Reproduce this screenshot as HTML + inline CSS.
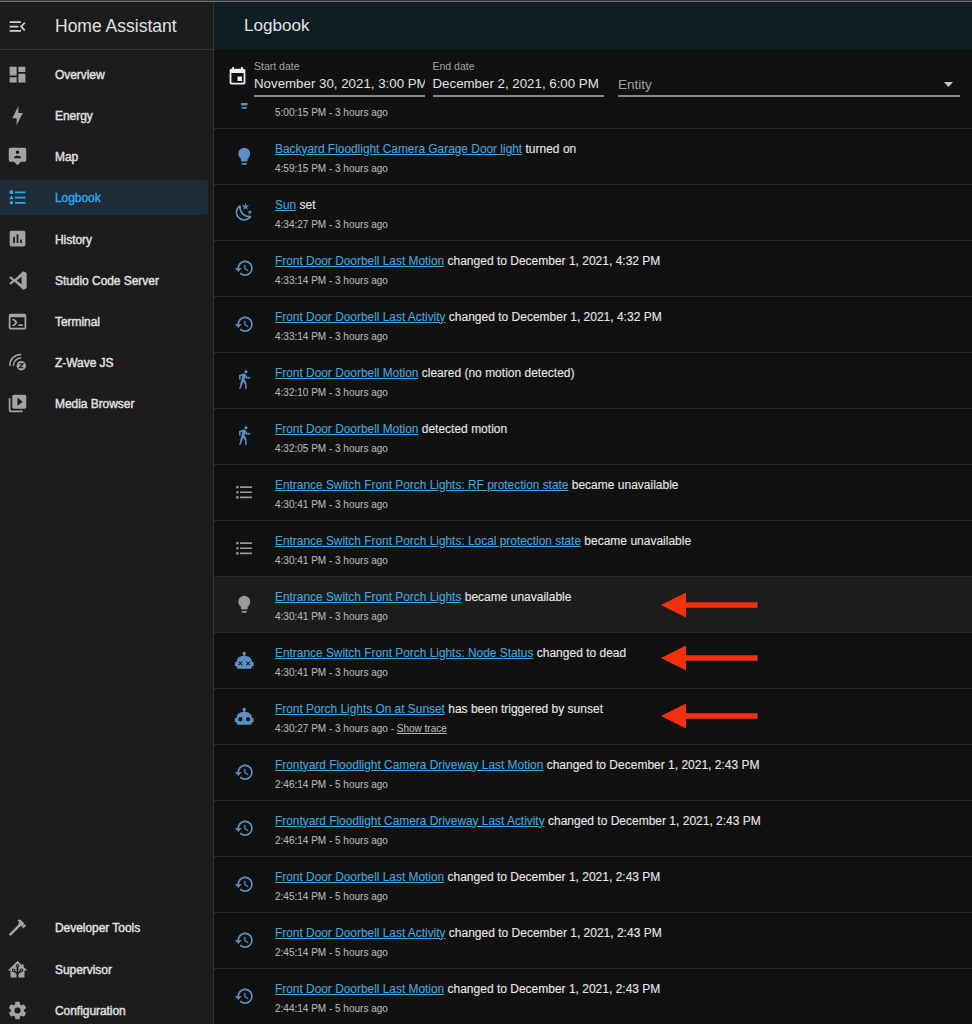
<!DOCTYPE html>
<html><head><meta charset="utf-8">
<style>
html,body{margin:0;padding:0;width:972px;height:1024px;overflow:hidden;background:#111111;font-family:"Liberation Sans",sans-serif;}
.a{position:absolute;}
.t{position:absolute;white-space:nowrap;line-height:20px;}
svg{position:absolute;display:block;}
.si{left:55px;font-weight:normal;color:#e1e1e1;font-size:12px;letter-spacing:-0.05px;-webkit-text-stroke:0.4px currentColor}
.row{position:absolute;left:214px;width:758px;height:55px;border-top:1px solid #2a2a2a;}
.msg{left:61px;font-size:12px;color:#e6e6e6;-webkit-text-stroke:0.12px currentColor}
.msg a{color:#46a4dc;text-decoration:underline;font-size:11.9px}
.tm{left:61px;font-size:10px;color:#b4b4b4;-webkit-text-stroke:0.1px currentColor}
.tm a{color:#b4b4b4;text-decoration:underline;}
</style></head>
<body>

<div class="a" style="left:0;top:0;width:972px;height:1px;background:#33383c"></div>
<div class="a" style="left:0;top:1px;width:972px;height:1px;background:#6b6f73"></div>
<div class="a" style="left:0;top:2px;width:213px;height:1022px;background:#1c1c1c"></div>
<div class="a" style="left:213px;top:2px;width:1px;height:1022px;background:#353535"></div>
<div class="a" style="left:0;top:49px;width:213px;height:1px;background:#353535"></div>
<div class="a" style="left:214px;top:2px;width:758px;height:47px;background:#101e24"></div>
<div class="a" style="left:214px;top:49px;width:758px;height:1px;background:#10191d"></div>
<svg style="left:7px;top:15.6px" width="21" height="21" viewBox="0 0 24 24"><path fill="#d2d2d2" fill-rule="evenodd" d="M21,15.61L19.59,17L14.58,12L19.59,7L21,8.39L17.44,12L21,15.61M3,6H16V8H3V6M3,13V11H13V13H3M3,18V16H16V18H3Z"/></svg>
<div class="t" style="left:55px;top:16px;font-size:17.5px;color:#e1e1e1;">Home Assistant</div>
<div class="a" style="left:0;top:180px;width:208px;height:35px;background:#1d2c37;border-radius:0 3px 3px 0"></div>
<svg style="left:7px;top:64px" width="21" height="21" viewBox="0 0 24 24"><path fill="#a3a3a3" fill-rule="evenodd" d="M13,3V9H21V3M13,21H21V11H13M3,21H11V15H3M3,13H11V3H3V13Z"/></svg>
<div class="t si" style="top:65.0px;color:#e1e1e1">Overview</div>
<svg style="left:7px;top:105px" width="21" height="21" viewBox="0 0 24 24"><path fill="#a3a3a3" fill-rule="evenodd" d="M11 15H6L13 1V9H18L11 23V15Z"/></svg>
<div class="t si" style="top:106.1px;color:#e1e1e1">Energy</div>
<svg style="left:7px;top:146px" width="21" height="21" viewBox="0 0 24 24"><path fill="#a3a3a3" fill-rule="evenodd" d="M2,4C2,2.89 2.9,2 4,2H20A2,2 0 0,1 22,4V16A2,2 0 0,1 20,18H16L12,22L8,18H4A2,2 0 0,1 2,16V4M16,14V13C16,11.67 13.33,11 12,11C10.67,11 8,11.67 8,13V14H16M12,5A2,2 0 0,0 10,7A2,2 0 0,0 12,9A2,2 0 0,0 14,7A2,2 0 0,0 12,5Z"/></svg>
<div class="t si" style="top:147.2px;color:#e1e1e1">Map</div>
<svg style="left:7px;top:187px" width="21" height="21" viewBox="0 0 24 24"><path fill="#2aa7ee" fill-rule="evenodd" d="M5,9.5L7.5,14H2.5L5,9.5M3,4H7V8H3V4M5,20A2,2 0 0,0 7,18A2,2 0 0,0 5,16A2,2 0 0,0 3,18A2,2 0 0,0 5,20M9,5V7H21V5H9M9,19H21V17H9V19M9,13H21V11H9V13Z"/></svg>
<div class="t si" style="top:188.4px;color:#2aa7ee">Logbook</div>
<svg style="left:7px;top:228px" width="21" height="21" viewBox="0 0 24 24"><path fill="#a3a3a3" fill-rule="evenodd" d="M19 3H5C3.9 3 3 3.9 3 5V19C3 20.1 3.9 21 5 21H19C20.1 21 21 20.1 21 19V5C21 3.9 20.1 3 19 3M9 17H7V10H9V17M13 17H11V7H13V17M17 17H15V13H17V17Z"/></svg>
<div class="t si" style="top:229.5px;color:#e1e1e1">History</div>
<svg style="left:7px;top:270px" width="21" height="21" viewBox="-0.8 -0.8 25.6 25.6"><path fill="#a3a3a3" fill-rule="evenodd" d="M17,16.47V7.39L11,11.93L17,16.47M2.22,9.19C1.95,8.92 1.97,8.41 2.2,8.08L3.2,7.16C3.37,7 3.8,6.93 4.11,7.16L8.37,10.41L18.25,1.38C18.65,1 19.32,0.86 19.86,1.12L22.66,2.5C22.95,2.66 23.2,2.97 23.2,3.34V20.62C23.2,20.97 22.99,21.27 22.66,21.44L19.86,22.82C19.36,23.05 18.7,22.97 18.26,22.57L8.38,13.5L4.11,16.75C3.8,16.97 3.37,16.93 3.2,16.75L2.2,15.83C1.94,15.55 1.97,15.08 2.22,14.81L5.97,11.93L2.22,9.19Z"/></svg>
<div class="t si" style="top:270.6px;color:#e1e1e1">Studio Code Server</div>
<svg style="left:7px;top:311px" width="21" height="21" viewBox="0 0 24 24"><path fill="#a3a3a3" fill-rule="evenodd" d="M20,19V7H4V19H20M20,3A2,2 0 0,1 22,5V19A2,2 0 0,1 20,21H4A2,2 0 0,1 2,19V5C2,3.89 2.9,3 4,3H20M13,17V15H18V17H13M9.58,13L5.57,9H8.4L11.7,12.3C12.09,12.69 12.09,13.33 11.7,13.72L8.42,17H5.59L9.58,13Z"/></svg>
<div class="t si" style="top:311.7px;color:#e1e1e1">Terminal</div>
<svg style="left:7px;top:352px" width="21" height="21" viewBox="0 0 24 24"><path fill="none" stroke="#a3a3a3" stroke-width="1.8" stroke-linecap="round" d="M3.2,15.3A12.5,12.5 0 0,1 15.7,2.8"/><path fill="none" stroke="#a3a3a3" stroke-width="1.8" stroke-linecap="round" d="M7.3,15.3A8.4,8.4 0 0,1 15.7,6.9"/><circle cx="16.3" cy="15.7" r="5.4" fill="#a3a3a3"/><path fill="none" stroke="#1c1c1c" stroke-width="1.4" stroke-linejoin="miter" d="M14,13.6H18.3L14.2,17.9H18.5"/></svg>
<div class="t si" style="top:352.8px;color:#e1e1e1">Z-Wave JS</div>
<svg style="left:7px;top:393px" width="21" height="21" viewBox="0 0 24 24"><path fill="#a3a3a3" fill-rule="evenodd" d="M4,6H2V20A2,2 0 0,0 4,22H18V20H4V6M20,2H8A2,2 0 0,0 6,4V16A2,2 0 0,0 8,18H20A2,2 0 0,0 22,16V4A2,2 0 0,0 20,2M12,5.5L18,10L12,14.5V5.5Z"/></svg>
<div class="t si" style="top:394.0px;color:#e1e1e1">Media Browser</div>
<svg style="left:7px;top:917px" width="21" height="21" viewBox="0 0 24 24"><path fill="#a3a3a3" fill-rule="evenodd" d="M2 19.63L13.43 8.2L12.72 7.5L14.14 6.07L12 3.89C13.2 2.7 15.09 2.7 16.27 3.89L19.87 7.5L18.45 8.91H21.29L22 9.62L18.45 13.21L17.74 12.5V9.62L16.27 11.04L15.56 10.33L4.13 21.76L2 19.63Z"/></svg>
<div class="t si" style="top:918.4px">Developer Tools</div>
<svg style="left:7px;top:959px" width="21" height="21" viewBox="0 0 24 24"><path fill="#a3a3a3" d="M21.8,13H20V21H13V17.67L15.79,14.88L16.5,15C17.66,15 18.6,14.06 18.6,12.9C18.6,11.74 17.66,10.8 16.5,10.8A2.1,2.1 0 0,0 14.4,12.9L14.5,13.61L13,15.13V9.65C13.66,9.29 14.1,8.6 14.1,7.8A2.1,2.1 0 0,0 12,5.7A2.1,2.1 0 0,0 9.9,7.8C9.9,8.6 10.34,9.29 11,9.65V15.13L9.5,13.61L9.6,12.9A2.1,2.1 0 0,0 7.5,10.8A2.1,2.1 0 0,0 5.4,12.9A2.1,2.1 0 0,0 7.5,15L8.21,14.88L11,17.67V21H4V13H2.25C1.83,13 1.42,13 1.42,12.79C1.43,12.570 1.85,12.15 2.28,11.72L11,3C11.33,2.67 11.67,2.33 12,2.33C12.33,2.33 12.67,2.67 13,3L17,7V6H19V9L21.780,11.78C22.18,12.18 22.59,12.59 22.6,12.8C22.6,13 22.2,13 21.8,13M7.5,12A0.9,0.9 0 0,1 8.4,12.9A0.9,0.9 0 0,1 7.5,13.8A0.9,0.9 0 0,1 6.6,12.9A0.9,0.9 0 0,1 7.5,12M16.5,12C17,12 17.4,12.4 17.4,12.9C17.4,13.4 17,13.8 16.5,13.8A0.9,0.9 0 0,1 15.6,12.9A0.9,0.9 0 0,1 16.5,12M12,6.9C12.5,6.9 12.9,7.3 12.9,7.8C12.9,8.3 12.5,8.7 12,8.7C11.5,8.7 11.1,8.3 11.1,7.8C11.1,7.3 11.5,6.9 12,6.9Z"/></svg>
<div class="t si" style="top:959.6px">Supervisor</div>
<svg style="left:7px;top:1000px" width="21" height="21" viewBox="0 0 24 24"><path fill="#a3a3a3" fill-rule="evenodd" d="M12,15.5A3.5,3.5 0 0,1 8.5,12A3.5,3.5 0 0,1 12,8.5A3.5,3.5 0 0,1 15.5,12A3.5,3.5 0 0,1 12,15.5M19.43,12.97C19.47,12.65 19.5,12.33 19.5,12C19.5,11.67 19.47,11.34 19.43,11L21.54,9.37C21.73,9.22 21.78,8.95 21.66,8.73L19.66,5.27C19.54,5.05 19.27,4.96 19.05,5.05L16.56,6.05C16.04,5.66 15.5,5.32 14.87,5.07L14.5,2.42C14.46,2.18 14.25,2 14,2H10C9.75,2 9.54,2.18 9.5,2.42L9.13,5.07C8.5,5.32 7.96,5.66 7.44,6.05L4.95,5.05C4.73,4.96 4.46,5.05 4.34,5.27L2.34,8.73C2.21,8.95 2.27,9.22 2.46,9.37L4.57,11C4.53,11.34 4.5,11.67 4.5,12C4.5,12.33 4.53,12.65 4.57,12.97L2.46,14.63C2.27,14.78 2.21,15.05 2.34,15.27L4.34,18.73C4.46,18.95 4.73,19.03 4.95,18.95L7.44,17.94C7.96,18.34 8.5,18.68 9.13,18.93L9.5,21.58C9.54,21.82 9.75,22 10,22H14C14.25,22 14.46,21.82 14.5,21.58L14.87,18.93C15.5,18.67 16.04,18.34 16.56,17.94L19.05,18.95C19.27,19.03 19.54,18.95 19.66,18.73L21.66,15.27C21.78,15.05 21.73,14.78 21.54,14.63L19.43,12.97Z"/></svg>
<div class="t si" style="top:1000.9px">Configuration</div>
<div class="t" style="left:244px;top:16px;font-size:17.1px;color:#e1e1e1;">Logbook</div>
<div class="a" style="left:214px;top:50px;width:758px;height:78px;overflow:hidden">
<svg style="left:19.75px;top:40.35px" width="20.5" height="20.5" viewBox="0 0 24 24"><path fill="#5b8fc6" fill-rule="evenodd" d="M12,2A7,7 0 0,0 5,9C5,11.38 6.19,13.47 8,14.74V17A1,1 0 0,0 9,18H15A1,1 0 0,0 16,17V14.74C17.81,13.47 19,11.38 19,9A7,7 0 0,0 12,2M9,21A1,1 0 0,0 10,22H14A1,1 0 0,0 15,21V20H9V21Z"/></svg>
<div class="t tm" style="top:52.5px">5:00:15 PM - 3 hours ago</div>
</div>
<div class="row" style="top:128px;background:transparent">
<svg style="left:19.75px;top:17.35px" width="20.5" height="20.5" viewBox="0 0 24 24"><path fill="#5b8fc6" fill-rule="evenodd" d="M12,2A7,7 0 0,0 5,9C5,11.38 6.19,13.47 8,14.74V17A1,1 0 0,0 9,18H15A1,1 0 0,0 16,17V14.74C17.81,13.47 19,11.38 19,9A7,7 0 0,0 12,2M9,21A1,1 0 0,0 10,22H14A1,1 0 0,0 15,21V20H9V21Z"/></svg>
<div class="t msg" style="top:9.5px"><a>Backyard Floodlight Camera Garage Door light</a> turned on</div>
<div class="t tm" style="top:29.5px">4:59:15 PM - 3 hours ago</div>
</div>
<div class="row" style="top:184px;background:transparent">
<svg style="left:19.75px;top:17.35px" width="20.5" height="20.5" viewBox="0 0 24 24"><path fill="#5b8fc6" fill-rule="evenodd" d="M17.75,4.09L15.22,6.03L16.13,9.09L13.5,7.28L10.87,9.09L11.78,6.03L9.25,4.09L12.44,4L13.5,1L14.56,4L17.75,4.09M21.25,11L19.61,12.25L20.2,14.23L18.5,13.06L16.8,14.23L17.39,12.25L15.75,11L17.81,10.95L18.5,9L19.19,10.95L21.25,11M18.97,15.95C19.8,15.87 20.69,17.05 20.16,17.8C19.84,18.25 19.5,18.67 19.08,19.07C15.17,23 8.84,23 4.94,19.07C1.03,15.17 1.03,8.83 4.94,4.930C5.34,4.53 5.760,4.17 6.210,3.85C6.960,3.32 8.14,4.21 8.06,5.04C7.79,7.9 8.75,10.87 10.95,13.06C13.14,15.26 16.1,16.22 18.97,15.95M17.33,17.97C14.5,17.81 11.7,16.64 9.53,14.5C7.36,12.31 6.2,9.5 6.04,6.68C3.23,9.82 3.34,14.64 6.35,17.66C9.37,20.67 14.19,20.78 17.33,17.97Z"/></svg>
<div class="t msg" style="top:9.5px"><a>Sun</a> set</div>
<div class="t tm" style="top:29.5px">4:34:27 PM - 3 hours ago</div>
</div>
<div class="row" style="top:240px;background:transparent">
<svg style="left:19.75px;top:17.35px" width="20.5" height="20.5" viewBox="0 0 24 24"><path fill="#5b8fc6" fill-rule="evenodd" d="M13.5,8H12V13L16.28,15.54L17,14.33L13.5,12.25V8M13,3A9,9 0 0,0 4,12H1L4.96,16.03L9,12H6A7,7 0 0,1 13,5A7,7 0 0,1 20,12A7,7 0 0,1 13,19C11.07,19 9.32,18.21 8.06,16.94L6.64,18.36C8.27,20 10.5,21 13,21A9,9 0 0,0 22,12A9,9 0 0,0 13,3Z"/></svg>
<div class="t msg" style="top:9.5px"><a>Front Door Doorbell Last Motion</a> changed to December 1, 2021, 4:32 PM</div>
<div class="t tm" style="top:29.5px">4:33:14 PM - 3 hours ago</div>
</div>
<div class="row" style="top:296px;background:transparent">
<svg style="left:19.75px;top:17.35px" width="20.5" height="20.5" viewBox="0 0 24 24"><path fill="#5b8fc6" fill-rule="evenodd" d="M13.5,8H12V13L16.28,15.54L17,14.33L13.5,12.25V8M13,3A9,9 0 0,0 4,12H1L4.96,16.03L9,12H6A7,7 0 0,1 13,5A7,7 0 0,1 20,12A7,7 0 0,1 13,19C11.07,19 9.32,18.21 8.06,16.94L6.64,18.36C8.27,20 10.5,21 13,21A9,9 0 0,0 22,12A9,9 0 0,0 13,3Z"/></svg>
<div class="t msg" style="top:9.5px"><a>Front Door Doorbell Last Activity</a> changed to December 1, 2021, 4:32 PM</div>
<div class="t tm" style="top:29.5px">4:33:14 PM - 3 hours ago</div>
</div>
<div class="row" style="top:352px;background:transparent">
<svg style="left:19.75px;top:17.35px" width="20.5" height="20.5" viewBox="0 0 24 24"><path fill="#5b8fc6" fill-rule="evenodd" d="M14.12,10H19V8.2H15.38L13.38,4.87C13.08,4.37 12.54,4.03 11.92,4.03C11.74,4.03 11.58,4.06 11.42,4.11L6,5.8V11H7.8V7.33L9.91,6.67L6,22H7.8L10.67,13.89L13,17V22H14.8V15.59L12.31,11.05L13.04,8.18L14.12,10M14,3.8C15,3.8 15.8,3 15.8,2C15.8,1 15,0.2 14,0.2C13,0.2 12.2,1 12.2,2C12.2,3 13,3.8 14,3.8Z"/></svg>
<div class="t msg" style="top:9.5px"><a>Front Door Doorbell Motion</a> cleared (no motion detected)</div>
<div class="t tm" style="top:29.5px">4:32:10 PM - 3 hours ago</div>
</div>
<div class="row" style="top:408px;background:transparent">
<svg style="left:19.75px;top:17.35px" width="20.5" height="20.5" viewBox="0 0 24 24"><path fill="#5b8fc6" fill-rule="evenodd" d="M14.12,10H19V8.2H15.38L13.38,4.87C13.08,4.37 12.54,4.03 11.92,4.03C11.74,4.03 11.58,4.06 11.42,4.11L6,5.8V11H7.8V7.33L9.91,6.67L6,22H7.8L10.67,13.89L13,17V22H14.8V15.59L12.31,11.05L13.04,8.18L14.12,10M14,3.8C15,3.8 15.8,3 15.8,2C15.8,1 15,0.2 14,0.2C13,0.2 12.2,1 12.2,2C12.2,3 13,3.8 14,3.8Z"/></svg>
<div class="t msg" style="top:9.5px"><a>Front Door Doorbell Motion</a> detected motion</div>
<div class="t tm" style="top:29.5px">4:32:05 PM - 3 hours ago</div>
</div>
<div class="row" style="top:464px;background:transparent">
<svg style="left:19.75px;top:17.35px" width="20.5" height="20.5" viewBox="0 0 24 24"><path fill="#9a9a9a" fill-rule="evenodd" d="M7,5H21V7H7V5M7,13V11H21V13H7M4,4.5A1.5,1.5 0 0,1 5.5,6A1.5,1.5 0 0,1 4,7.5A1.5,1.5 0 0,1 2.5,6A1.5,1.5 0 0,1 4,4.5M4,10.5A1.5,1.5 0 0,1 5.5,12A1.5,1.5 0 0,1 4,13.5A1.5,1.5 0 0,1 2.5,12A1.5,1.5 0 0,1 4,10.5M7,19V17H21V19H7M4,16.5A1.5,1.5 0 0,1 5.5,18A1.5,1.5 0 0,1 4,19.5A1.5,1.5 0 0,1 2.5,18A1.5,1.5 0 0,1 4,16.5Z"/></svg>
<div class="t msg" style="top:9.5px"><a>Entrance Switch Front Porch Lights: RF protection state</a> became unavailable</div>
<div class="t tm" style="top:29.5px">4:30:41 PM - 3 hours ago</div>
</div>
<div class="row" style="top:520px;background:transparent">
<svg style="left:19.75px;top:17.35px" width="20.5" height="20.5" viewBox="0 0 24 24"><path fill="#9a9a9a" fill-rule="evenodd" d="M7,5H21V7H7V5M7,13V11H21V13H7M4,4.5A1.5,1.5 0 0,1 5.5,6A1.5,1.5 0 0,1 4,7.5A1.5,1.5 0 0,1 2.5,6A1.5,1.5 0 0,1 4,4.5M4,10.5A1.5,1.5 0 0,1 5.5,12A1.5,1.5 0 0,1 4,13.5A1.5,1.5 0 0,1 2.5,12A1.5,1.5 0 0,1 4,10.5M7,19V17H21V19H7M4,16.5A1.5,1.5 0 0,1 5.5,18A1.5,1.5 0 0,1 4,19.5A1.5,1.5 0 0,1 2.5,18A1.5,1.5 0 0,1 4,16.5Z"/></svg>
<div class="t msg" style="top:9.5px"><a>Entrance Switch Front Porch Lights: Local protection state</a> became unavailable</div>
<div class="t tm" style="top:29.5px">4:30:41 PM - 3 hours ago</div>
</div>
<div class="row" style="top:576px;background:#1c1c1c">
<svg style="left:19.75px;top:17.35px" width="20.5" height="20.5" viewBox="0 0 24 24"><path fill="#9a9a9a" fill-rule="evenodd" d="M12,2A7,7 0 0,0 5,9C5,11.38 6.19,13.47 8,14.74V17A1,1 0 0,0 9,18H15A1,1 0 0,0 16,17V14.74C17.81,13.47 19,11.38 19,9A7,7 0 0,0 12,2M9,21A1,1 0 0,0 10,22H14A1,1 0 0,0 15,21V20H9V21Z"/></svg>
<div class="t msg" style="top:9.5px"><a>Entrance Switch Front Porch Lights</a> became unavailable</div>
<div class="t tm" style="top:29.5px">4:30:41 PM - 3 hours ago</div>
</div>
<div class="row" style="top:632px;background:transparent">
<svg style="left:19.75px;top:17.35px" width="20.5" height="20.5" viewBox="0 0 24 24"><path fill="#5b8fc6" fill-rule="evenodd" d="M12,2A2,2 0 0,1 14,4C14,4.74 13.6,5.39 13,5.73V7H14A7,7 0 0,1 21,14H22A1,1 0 0,1 23,15V18A1,1 0 0,1 22,19H21V20A2,2 0 0,1 19,22H5A2,2 0 0,1 3,20V19H2A1,1 0 0,1 1,18V15A1,1 0 0,1 2,14H3A7,7 0 0,1 10,7H11V5.73C10.4,5.39 10,4.74 10,4A2,2 0 0,1 12,2M5.10,13.95L5.85,13.20L7.50,14.85L9.15,13.20L9.90,13.95L8.25,15.60L9.90,17.25L9.15,18.00L7.50,16.35L5.85,18.00L5.10,17.25L6.75,15.60ZM14.10,13.95L14.85,13.20L16.50,14.85L18.15,13.20L18.90,13.95L17.25,15.60L18.90,17.25L18.15,18.00L16.50,16.35L14.85,18.00L14.10,17.25L15.75,15.60Z"/></svg>
<div class="t msg" style="top:9.5px"><a>Entrance Switch Front Porch Lights: Node Status</a> changed to dead</div>
<div class="t tm" style="top:29.5px">4:30:41 PM - 3 hours ago</div>
</div>
<div class="row" style="top:688px;background:transparent">
<svg style="left:19.75px;top:17.35px" width="20.5" height="20.5" viewBox="0 0 24 24"><path fill="#5b8fc6" fill-rule="evenodd" d="M12,2A2,2 0 0,1 14,4C14,4.74 13.6,5.39 13,5.73V7H14A7,7 0 0,1 21,14H22A1,1 0 0,1 23,15V18A1,1 0 0,1 22,19H21V20A2,2 0 0,1 19,22H5A2,2 0 0,1 3,20V19H2A1,1 0 0,1 1,18V15A1,1 0 0,1 2,14H3A7,7 0 0,1 10,7H11V5.73C10.4,5.39 10,4.74 10,4A2,2 0 0,1 12,2M7.5,13A2.5,2.5 0 0,0 5,15.5A2.5,2.5 0 0,0 7.5,18A2.5,2.5 0 0,0 10,15.5A2.5,2.5 0 0,0 7.5,13M16.5,13A2.5,2.5 0 0,0 14,15.5A2.5,2.5 0 0,0 16.5,18A2.5,2.5 0 0,0 19,15.5A2.5,2.5 0 0,0 16.5,13Z"/></svg>
<div class="t msg" style="top:9.5px"><a>Front Porch Lights On at Sunset</a> has been triggered by sunset</div>
<div class="t tm" style="top:29.5px">4:30:27 PM - 3 hours ago - <a>Show trace</a></div>
</div>
<div class="row" style="top:744px;background:transparent">
<svg style="left:19.75px;top:17.35px" width="20.5" height="20.5" viewBox="0 0 24 24"><path fill="#5b8fc6" fill-rule="evenodd" d="M13.5,8H12V13L16.28,15.54L17,14.33L13.5,12.25V8M13,3A9,9 0 0,0 4,12H1L4.96,16.03L9,12H6A7,7 0 0,1 13,5A7,7 0 0,1 20,12A7,7 0 0,1 13,19C11.07,19 9.32,18.21 8.06,16.94L6.64,18.36C8.27,20 10.5,21 13,21A9,9 0 0,0 22,12A9,9 0 0,0 13,3Z"/></svg>
<div class="t msg" style="top:9.5px"><a>Frontyard Floodlight Camera Driveway Last Motion</a> changed to December 1, 2021, 2:43 PM</div>
<div class="t tm" style="top:29.5px">2:46:14 PM - 5 hours ago</div>
</div>
<div class="row" style="top:800px;background:transparent">
<svg style="left:19.75px;top:17.35px" width="20.5" height="20.5" viewBox="0 0 24 24"><path fill="#5b8fc6" fill-rule="evenodd" d="M13.5,8H12V13L16.28,15.54L17,14.33L13.5,12.25V8M13,3A9,9 0 0,0 4,12H1L4.96,16.03L9,12H6A7,7 0 0,1 13,5A7,7 0 0,1 20,12A7,7 0 0,1 13,19C11.07,19 9.32,18.21 8.06,16.94L6.64,18.36C8.27,20 10.5,21 13,21A9,9 0 0,0 22,12A9,9 0 0,0 13,3Z"/></svg>
<div class="t msg" style="top:9.5px"><a>Frontyard Floodlight Camera Driveway Last Activity</a> changed to December 1, 2021, 2:43 PM</div>
<div class="t tm" style="top:29.5px">2:46:14 PM - 5 hours ago</div>
</div>
<div class="row" style="top:856px;background:transparent">
<svg style="left:19.75px;top:17.35px" width="20.5" height="20.5" viewBox="0 0 24 24"><path fill="#5b8fc6" fill-rule="evenodd" d="M13.5,8H12V13L16.28,15.54L17,14.33L13.5,12.25V8M13,3A9,9 0 0,0 4,12H1L4.96,16.03L9,12H6A7,7 0 0,1 13,5A7,7 0 0,1 20,12A7,7 0 0,1 13,19C11.07,19 9.32,18.21 8.06,16.94L6.64,18.36C8.27,20 10.5,21 13,21A9,9 0 0,0 22,12A9,9 0 0,0 13,3Z"/></svg>
<div class="t msg" style="top:9.5px"><a>Front Door Doorbell Last Motion</a> changed to December 1, 2021, 2:43 PM</div>
<div class="t tm" style="top:29.5px">2:45:14 PM - 5 hours ago</div>
</div>
<div class="row" style="top:912px;background:transparent">
<svg style="left:19.75px;top:17.35px" width="20.5" height="20.5" viewBox="0 0 24 24"><path fill="#5b8fc6" fill-rule="evenodd" d="M13.5,8H12V13L16.28,15.54L17,14.33L13.5,12.25V8M13,3A9,9 0 0,0 4,12H1L4.96,16.03L9,12H6A7,7 0 0,1 13,5A7,7 0 0,1 20,12A7,7 0 0,1 13,19C11.07,19 9.32,18.21 8.06,16.94L6.64,18.36C8.27,20 10.5,21 13,21A9,9 0 0,0 22,12A9,9 0 0,0 13,3Z"/></svg>
<div class="t msg" style="top:9.5px"><a>Front Door Doorbell Last Activity</a> changed to December 1, 2021, 2:43 PM</div>
<div class="t tm" style="top:29.5px">2:45:14 PM - 5 hours ago</div>
</div>
<div class="row" style="top:968px;background:transparent">
<svg style="left:19.75px;top:17.35px" width="20.5" height="20.5" viewBox="0 0 24 24"><path fill="#5b8fc6" fill-rule="evenodd" d="M13.5,8H12V13L16.28,15.54L17,14.33L13.5,12.25V8M13,3A9,9 0 0,0 4,12H1L4.96,16.03L9,12H6A7,7 0 0,1 13,5A7,7 0 0,1 20,12A7,7 0 0,1 13,19C11.07,19 9.32,18.21 8.06,16.94L6.64,18.36C8.27,20 10.5,21 13,21A9,9 0 0,0 22,12A9,9 0 0,0 13,3Z"/></svg>
<div class="t msg" style="top:9.5px"><a>Front Door Doorbell Last Motion</a> changed to December 1, 2021, 2:43 PM</div>
<div class="t tm" style="top:29.5px">2:44:14 PM - 5 hours ago</div>
</div>
<div class="a" style="left:214px;top:50px;width:758px;height:53px;background:#111111"></div>
<svg style="left:226.5px;top:66px" width="21" height="21" viewBox="0 0 24 24"><path fill="#f0f0f0" fill-rule="evenodd" d="M19,19H5V8H19M16,1V3H8V1H6V3H5C3.89,3 3,3.89 3,5V19A2,2 0 0,0 5,21H19A2,2 0 0,0 21,19V5C21,3.89 20.1,3 19,3H18V1M17,12H12V17H17V12Z"/></svg>
<div class="t" style="left:254px;top:56px;font-size:10.5px;color:#a0a0a0">Start date</div>
<div class="a" style="left:254px;top:70px;width:171px;height:30px;overflow:hidden"><div class="t" style="left:0;top:4.3px;font-size:13.3px;color:#e1e1e1">November 30, 2021, 3:00 PM</div></div>
<div class="a" style="left:254px;top:95px;width:171px;height:2px;background:#868686"></div>
<div class="t" style="left:432.5px;top:56px;font-size:10.5px;color:#a0a0a0">End date</div>
<div class="t" style="left:432.5px;top:74.3px;font-size:13.3px;color:#e1e1e1">December 2, 2021, 6:00 PM</div>
<div class="a" style="left:433px;top:95px;width:171px;height:2px;background:#868686"></div>
<div class="t" style="left:618px;top:75px;font-size:13.5px;color:#a0a0a0">Entity</div>
<div class="a" style="left:618px;top:95px;width:342px;height:2px;background:#868686"></div>
<svg style="left:944px;top:82px" width="9" height="5" viewBox="0 0 9 5"><path fill="#c8c8c8" d="M0,0H9L4.5,5Z"/></svg>
<svg style="left:660px;top:591.5px" width="100" height="26" viewBox="0 0 100 26"><path fill="#f2300e" d="M1,13L26,0.5V10.2H97.5V15.8H26V25.5Z"/></svg>
<svg style="left:660px;top:645px" width="100" height="26" viewBox="0 0 100 26"><path fill="#f2300e" d="M1,13L26,0.5V10.2H97.5V15.8H26V25.5Z"/></svg>
<svg style="left:660px;top:702.5px" width="100" height="26" viewBox="0 0 100 26"><path fill="#f2300e" d="M1,13L26,0.5V10.2H97.5V15.8H26V25.5Z"/></svg>
</body></html>
